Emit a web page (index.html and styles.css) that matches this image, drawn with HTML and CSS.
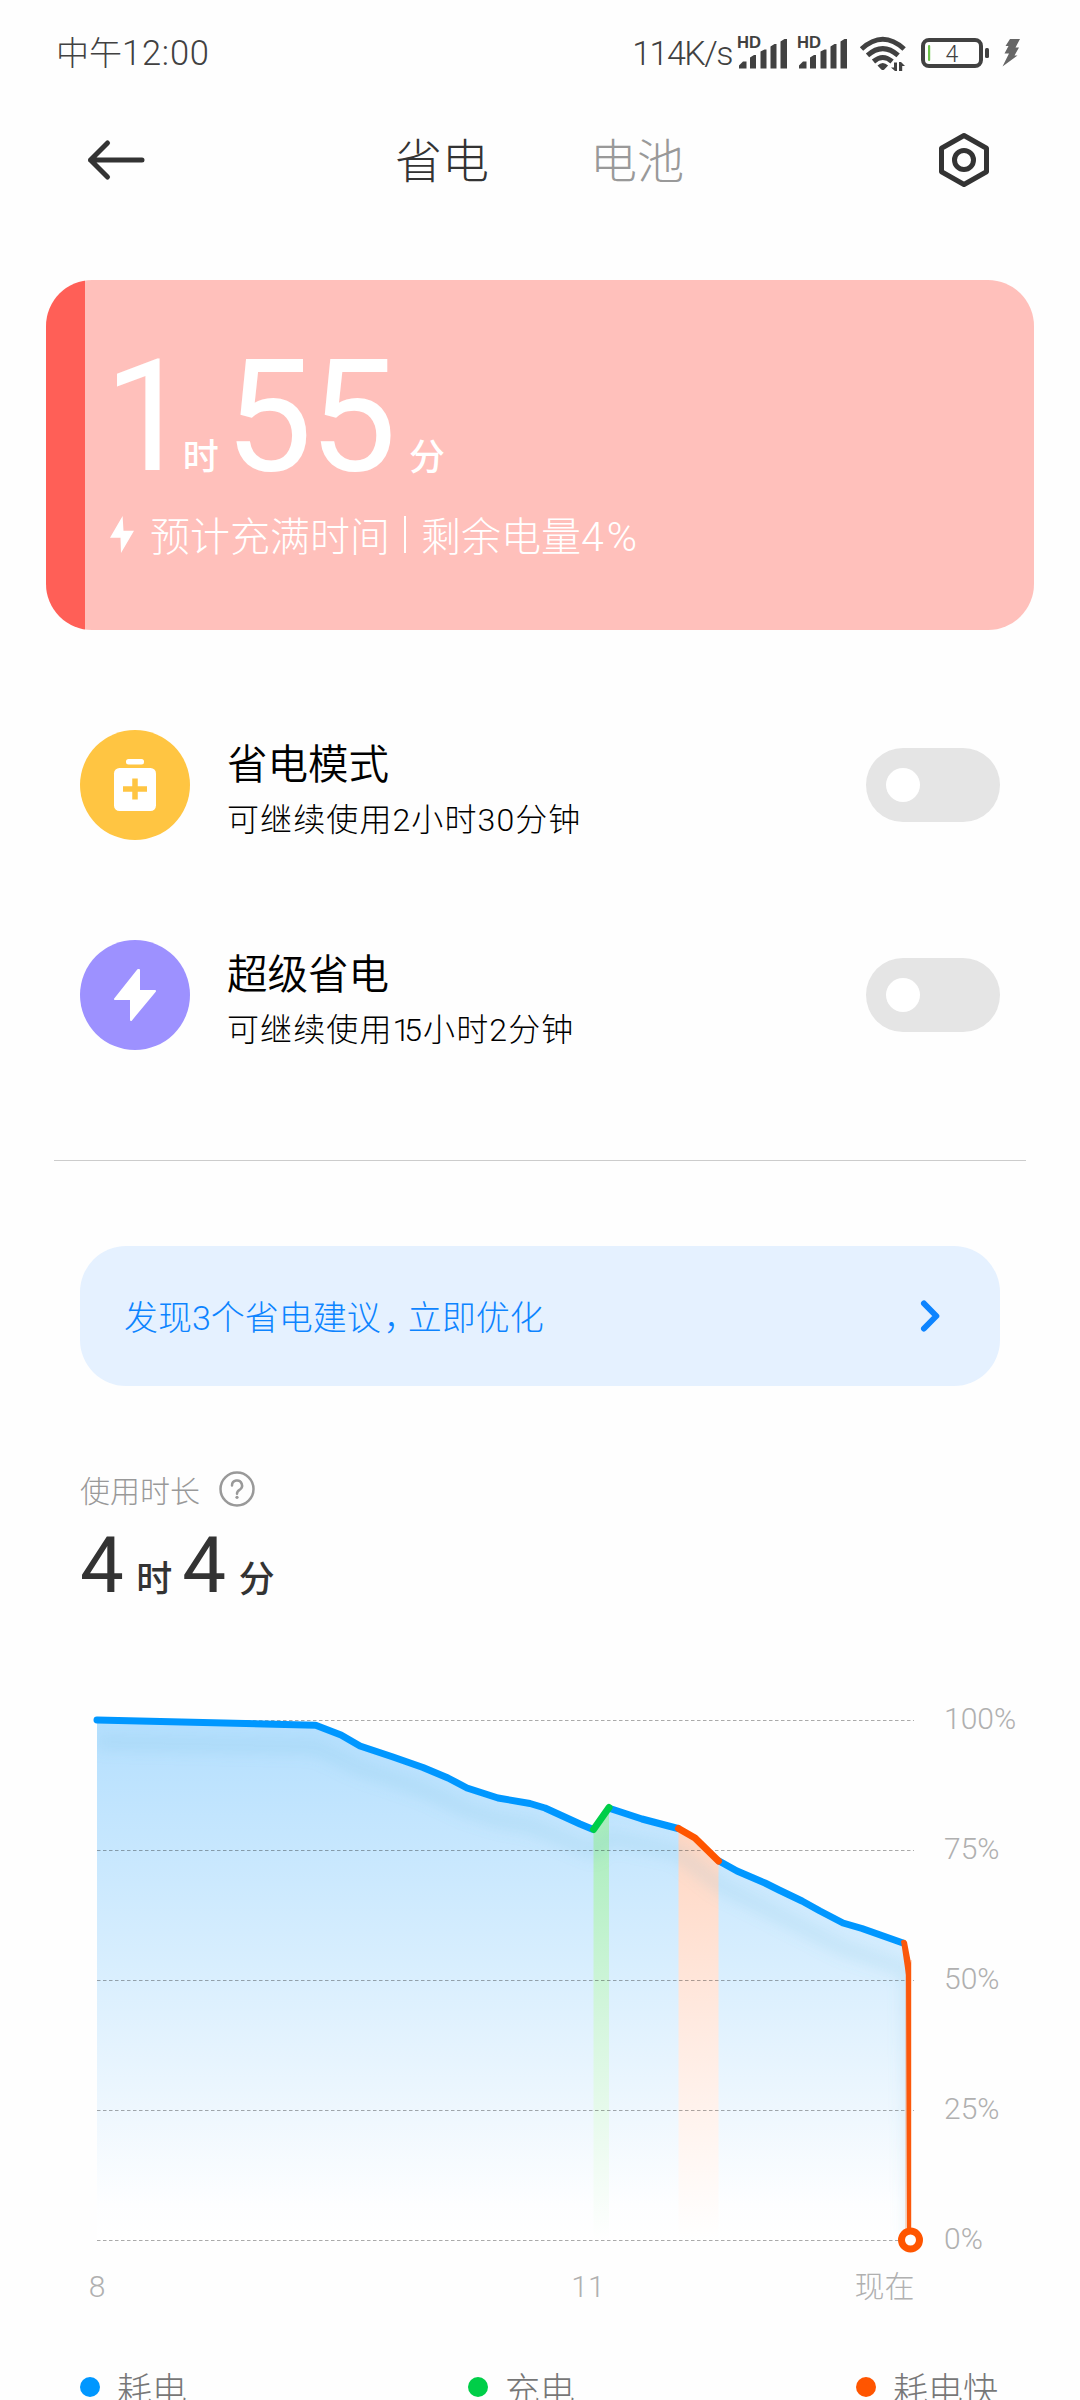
FILE: index.html
```html
<!DOCTYPE html>
<html lang="zh-CN">
<head>
<meta charset="utf-8">
<title>省电</title>
<link rel="stylesheet" href="styles.css">
</head>
<body>
<div class="screen">
  <div class="status">
    <span class="status-time">中午<span class="clock">12:00</span></span>
    <div class="status-right">
      <span class="speed">114K/s</span>
      <svg class="status-icons" width="288" height="40" viewBox="735 32 288 40">
        <g class="hd"><text x="737" y="47.2" textLength="24" lengthAdjust="spacingAndGlyphs">HD</text><text x="797" y="47.2" textLength="24" lengthAdjust="spacingAndGlyphs">HD</text></g>
        <g id="bars" class="ink">
          <path d="M739 67.500v-3l4-4h3.500v7zM750 67.500v-11l4-2.500h2v13.500zM760.500 67.500v-17l4-2h2v19zM770.500 67.500v-22l4-2.500h2v24.500zM780.500 67.500v-27l4-2.500h2.500v29.500z"/>
        </g>
        <use href="#bars" x="60"/>
        <g class="wifi">
          <path d="M861.500 48q21.300-19.500 42.600 0M867.500 54.300q15.300-13.500 30.600 0M873.500 60.500q9.300-8 18.600 0"/>
        </g>
        <path class="ink" d="M877.500 64.500q5.300-5 10.600 0l-3.800 4q-1.500 1-3 0zM891 66.500h3v-5h3v8.500h-2zM899 61h2l4 4h-2.800v5h-3.200z"/>
        <rect class="battery" x="923" y="39" width="58" height="26" rx="6"/>
        <rect class="ink" x="985" y="47" width="4" height="10" rx="1.500"/>
        <rect x="928" y="44" width="2.200" height="16" rx="1" fill="#6cc24a"/>
        <text class="level" x="952" y="60.500">4</text>
        <path d="M1010 38h10l-4.500 8.500h3.500l-4.500 8h3l-15 11 6.500-13h-4.500l4-7.500h-3z" fill="#666"/>
      </svg>
    </div>
  </div>

  <header class="header">
    <svg class="back" width="60" height="44" viewBox="0 0 60 44"><path d="M4.500 22H56M21.500 5L4.500 22l17 17"/></svg>
    <nav class="tabs"><span class="tab tab-on">省电</span><span class="tab">电池</span></nav>
    <svg class="gear" width="54" height="58" viewBox="0 0 54 58"><path d="M27 4.500L49.500 17.200V40.800L27 53.500L4.500 40.800V17.200Z"/><circle cx="27" cy="29" r="9.500"/></svg>
  </header>

  <section class="card">
    <div class="card-time"><span class="big one">1</span><span class="unit">时</span><span class="big fives">55</span><span class="unit">分</span></div>
    <div class="card-note">
      <svg width="26" height="38" viewBox="109 515 26 38"><path fill="#fff" d="M122.600 516L123.500 530.700H134L121 553L120.500 537.700H110Z"/></svg>
      <span class="note-a">预计充满时间</span><i class="bar"></i><span>剩余电量<span class="percent">4%</span></span>
    </div>
  </section>

  <section class="modes">
    <div class="mode">
      <svg class="mode-icon" width="110" height="110" viewBox="0 0 110 110"><circle cx="55" cy="55" r="55" fill="#ffc542"/><rect x="46" y="29" width="18" height="5.500" rx="2.500" fill="#fff"/><rect x="34" y="38" width="42" height="43" rx="5.500" fill="#fff"/><path d="M43 59h24M55 48.500v21" stroke="#ffc542" stroke-width="5.500" fill="none"/></svg>
      <div class="mode-text"><div class="mode-title">省电模式</div><div class="mode-sub">可继续使用2小时30分钟</div></div>
      <span class="switch"><i></i></span>
    </div>
    <div class="mode">
      <svg class="mode-icon" width="110" height="110" viewBox="0 0 110 110"><circle cx="55" cy="55" r="55" fill="#9d91ff"/><path d="M58 30L35 59H51V80L75 51H59V30Z" fill="#fff" stroke="#fff" stroke-width="2" stroke-linejoin="round"/></svg>
      <div class="mode-text"><div class="mode-title">超级省电</div><div class="mode-sub">可继续使用<span class="tight">1</span>5小时2分钟</div></div>
      <span class="switch"><i></i></span>
    </div>
  </section>

  <hr class="divider">

  <section class="advice">
    <span class="advice-text">发现3个省电建议<span class="comma">，</span>立即优化</span>
    <svg width="24" height="36" viewBox="0 0 24 36"><path d="M5 5.500L17.300 18L5 30.500"/></svg>
  </section>

  <section class="usage">
    <div class="usage-label"><span>使用时长</span>
      <svg width="36" height="36" viewBox="0 0 36 36"><circle cx="18" cy="18" r="16.500"/><path d="M13 14.500a5 5 0 1 1 7.500 4.300q-2.500 1.400-2.500 4"/><circle class="dot" cx="18" cy="26.300" r="1.600"/></svg>
    </div>
    <div class="usage-time"><span class="num">4</span><span class="unit">时</span><span class="num">4</span><span class="unit">分</span></div>
  </section>

  <svg class="chart" width="1080" height="640" viewBox="0 1690 1080 640">
    <defs>
      <linearGradient id="blue" gradientUnits="userSpaceOnUse" x1="0" y1="1720" x2="0" y2="2240"><stop offset="0" stop-color="#b4dffe"/><stop offset=".5" stop-color="#daeffe"/><stop offset=".75" stop-color="#eef7fe"/><stop offset=".93" stop-color="#fdfeff"/><stop offset="1" stop-color="#fff"/></linearGradient>
      <linearGradient id="green" gradientUnits="userSpaceOnUse" x1="0" y1="1807" x2="0" y2="2240"><stop offset="0" stop-color="#a5ecb9"/><stop offset=".5" stop-color="#d5f6de"/><stop offset="1" stop-color="#fff"/></linearGradient>
      <linearGradient id="orange" gradientUnits="userSpaceOnUse" x1="0" y1="1828" x2="0" y2="2240"><stop offset="0" stop-color="#ffd6c2"/><stop offset=".5" stop-color="#ffebe2"/><stop offset="1" stop-color="#fff"/></linearGradient>
      <filter id="soft" x="-10%" y="-20%" width="120%" height="140%"><feGaussianBlur stdDeviation="7"/></filter>
      <clipPath id="area"><path d="M97 1720L315.700 1725.300L341 1735L360 1746L423 1767.500L448 1778L467 1788L498 1798L530 1803.500L545 1808L580 1824L593.500 1829.500L609 1807.500L642 1819L678 1828.500L695 1838L719 1861L737 1871L765 1883L779 1890L802 1901L820 1911L843 1923L862 1928.500L904 1943.500L908 1965V2240H97Z"/></clipPath>
    </defs>
    <g clip-path="url(#area)">
      <rect x="97" y="1715" width="812" height="525" fill="url(#blue)"/>
      <rect x="593.500" y="1800" width="15.500" height="440" fill="url(#green)"/>
      <rect x="678.500" y="1820" width="40" height="420" fill="url(#orange)"/>
      <path filter="url(#soft)" fill="none" stroke="#64b8d8" stroke-opacity=".14" stroke-width="16" d="M97 1742L315.700 1747L360 1768L423 1789.500L467 1810L498 1820L530 1825.500L593.500 1851.500L609 1838L678 1852.500L719 1885L765 1908L843 1948L908 1970L912 2240"/>
    </g>
    <path class="grid" d="M97 1720.500H914M97 1850.500H914M97 1980.500H914M97 2110.500H914M97 2240.500H914"/>
    <path d="M908.500 1960V2240" stroke="#ff5a00" stroke-opacity=".2" stroke-width="7"/>
    <g class="line">
      <path stroke="#0097ff" d="M97 1720L315.700 1725.300L341 1735L360 1746L393 1757L423 1767.500L448 1778L467 1788L498 1798L530 1803.500L545 1808L580 1824L592 1829M610 1808.500L642 1819L678 1828.500M719 1861L737 1871L765 1883L779 1890L802 1901L820 1911L843 1923L862 1928.500L903 1943"/>
      <path stroke="#00ce48" d="M593.500 1829.500L609 1807.500"/>
      <path stroke="#ff5500" d="M678.500 1828.500L695 1838L718.500 1861"/>
    </g>
    <path d="M901 1941Q905 1938 907 1942L911 1963V2240H907L906 1975Z" fill="#fb580b"/>
    <circle cx="910.500" cy="2240" r="9" fill="#fff" stroke="#ff5500" stroke-width="7"/>
    <g class="axis">
      <text x="944" y="1729">100%</text><text x="944" y="1859">75%</text><text x="944" y="1989">50%</text><text x="944" y="2119">25%</text><text x="944" y="2249">0%</text>
      <text x="97" y="2297" text-anchor="middle">8</text><text x="588" y="2297" text-anchor="middle">11</text><text x="914.500" y="2297" text-anchor="end">现在</text>
    </g>
  </svg>

  <div class="legend">
    <span class="key"><i class="blue"></i>耗电</span><span class="key"><i class="green"></i>充电</span><span class="key"><i class="orange"></i>耗电快</span>
  </div>
</div>
</body>
</html>
```
FILE: styles.css
```css
* { box-sizing: border-box; }
body { margin: 0; background: #fdfdfd; }
.screen {
  width: 1080px; height: 2400px; overflow: hidden; background: #fefefe;
  display: flex; flex-direction: column;
  font-family: Roboto, "Noto Sans CJK SC", sans-serif; font-weight: 300; color: #333;
}
.screen > * { flex: none; }
svg { display: block; }

.status { height: 106px; padding: 0 57px 0 56px; display: flex; align-items: center; justify-content: space-between; color: #414141; }
.status-time { font-size: 33px; padding-bottom: 4px; }
.clock { font-size: 34.500px; letter-spacing: .8px; }
.status-right { display: flex; align-items: center; gap: 3px; }
.speed { font-size: 34px; letter-spacing: -1.500px; padding-bottom: 1px; }
.status-icons text { font-family: "Liberation Sans", sans-serif; font-weight: 700; font-size: 16px; fill: #414141; }
.status-icons .level { font-family: Roboto, sans-serif; font-weight: 300; font-size: 23px; text-anchor: middle; }
.ink { fill: #414141; }
.wifi { fill: none; stroke: #414141; stroke-width: 5; }
.battery { fill: none; stroke: #414141; stroke-width: 4; }

.header { height: 108px; padding: 0 89px 0 86px; display: flex; align-items: center; justify-content: space-between; }
.back, .gear { fill: none; stroke: #333; stroke-width: 5; stroke-linecap: round; stroke-linejoin: round; }
.tabs { display: flex; gap: 101px; padding: 4px 4px 0 0; }
.tab { font-size: 47px; line-height: 60px; color: #999; }
.tab-on { color: #333; }

.card { margin: 66px 46px 0; height: 350px; border-radius: 46px; padding: 67px 64px 0 63px; color: #fff; background: linear-gradient(90deg, #ff5f57 38.500px, #ffc0bb 39px); }
.card-time { display: flex; align-items: baseline; height: 157px; line-height: 140px; font-weight: 400; }
.big { font-size: 156px; letter-spacing: -3.500px; }
.one { margin-left: -5px; letter-spacing: -9px; }
.fives { margin: 0 16px 0 6px; }
.unit { font-size: 36px; font-weight: 500; }
.card-note { display: flex; align-items: center; height: 60px; font-size: 40px; }
.note-a { margin-left: 15px; }
.percent { font-size: 41px; letter-spacing: 3px; }
.bar { width: 2px; height: 37px; background: #fff; margin: 0 15px 0 14px; }

.modes { padding: 100px 80px 0; display: flex; flex-direction: column; gap: 100px; }
.mode { display: flex; align-items: center; height: 110px; }
.mode-text { flex: 1; margin-left: 37px; padding-top: 10px; color: #000; }
.mode-title { font-size: 40.500px; line-height: 60px; font-weight: 350; }
.mode-sub { font-size: 32px; line-height: 50px; letter-spacing: 1.100px; }
.tight { letter-spacing: -5px; margin-right: -1px; }
.switch { width: 134px; height: 74px; border-radius: 37px; background: #e5e5e5; padding: 20px; }
.switch i { display: block; width: 34px; height: 34px; border-radius: 50%; background: #fff; }

.divider { width: 972px; height: 1px; border: 0; margin: 110px 54px 85px; background: #ccc; }

.advice { margin: 0 80px; height: 140px; border-radius: 46px; background: #e5f1ff; color: #0d84ff; font-size: 34px; padding: 0 57px 0 44px; display: flex; align-items: center; justify-content: space-between; }
.advice-text { padding-bottom: 2px; }
.advice path { fill: none; stroke: #0d84ff; stroke-width: 6; stroke-linecap: round; stroke-linejoin: round; }
.comma { margin-left: 3px; letter-spacing: -10px; }

.usage { padding: 80px 80px 0; }
.usage-label { display: flex; align-items: center; gap: 19px; height: 46px; font-size: 30px; color: #999; }
.usage-label svg { fill: none; stroke: #999; stroke-width: 2.500; stroke-linecap: round; }
.usage-label .dot { fill: #999; stroke: none; }
.usage-time { display: flex; align-items: baseline; height: 98px; padding-top: 5px; line-height: 98px; font-weight: 400; color: #333; }
.num { font-size: 78px; margin-right: 12.500px; }
.usage-time .unit + .num { margin-left: 10px; }
.chart { margin-top: 80px; }
.grid { fill: none; stroke: #000; stroke-opacity: .33; stroke-width: 1; stroke-dasharray: 3.500 2.500; }
.line { fill: none; stroke-width: 7; stroke-linecap: round; stroke-linejoin: round; }
.axis text { font-size: 30px; fill: #b0b0b0; font-family: Roboto, "Noto Sans CJK SC", sans-serif; font-weight: 300; }

.legend { height: 70px; margin-top: 21px; padding: 0 82px 0 80px; display: flex; justify-content: space-between; }
.key { display: flex; align-items: center; gap: 17px; height: 72px; font-size: 35px; color: #777; }
.key i { width: 20px; height: 20px; border-radius: 50%; }
.blue { background: #0097ff; }
.green { background: #00ce48; }
.orange { background: #ff5500; }
```
